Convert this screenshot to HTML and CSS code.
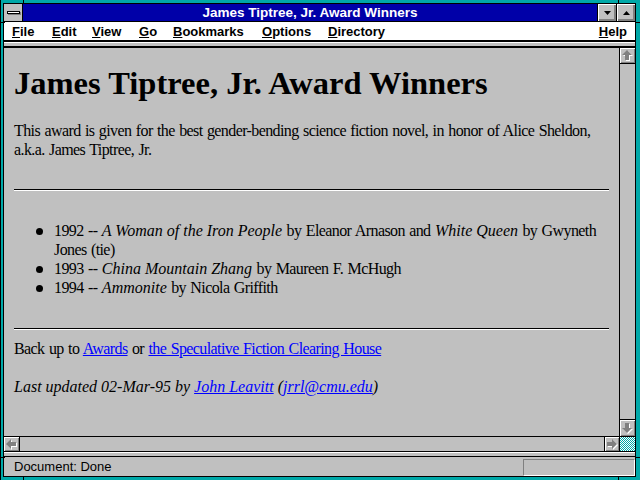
FILE: index.html
```html
<!DOCTYPE html>
<html>
<head>
<meta charset="utf-8">
<title>James Tiptree, Jr. Award Winners</title>
<link rel="stylesheet" href="styles.css">
</head>
<body>
<div class="window">
  <span class="notch nv n-tl"></span>
  <span class="notch nv n-tr"></span>
  <span class="notch nv n-bl"></span>
  <span class="notch nv n-br"></span>
  <span class="notch nh n-lt"></span>
  <span class="notch nh n-lb"></span>
  <span class="notch nh n-rt"></span>
  <span class="notch nh n-rb"></span>
  <div class="frame">
    <div class="titlebar">
      <div class="sysmenu"><span class="sysbar"></span></div>
      <div class="title">James Tiptree, Jr. Award Winners</div>
      <div class="tbtn"><svg width="7" height="4" viewBox="0 0 7 4"><path d="M0 0H7L3.5 4Z" fill="#000"/></svg></div>
      <div class="tbtn"><svg width="7" height="4" viewBox="0 0 7 4"><path d="M0 4H7L3.5 0Z" fill="#000"/></svg></div>
    </div>
    <div class="menubar">
      <span class="mi"><u>F</u>ile</span>
      <span class="mi"><u>E</u>dit</span>
      <span class="mi"><u>V</u>iew</span>
      <span class="mi"><u>G</u>o</span>
      <span class="mi"><u>B</u>ookmarks</span>
      <span class="mi"><u>O</u>ptions</span>
      <span class="mi"><u>D</u>irectory</span>
      <span class="spacer"></span>
      <span class="mi"><u>H</u>elp</span>
    </div>
    <div class="strip"></div>
    <div class="middle">
      <div class="page">
        <h1>James Tiptree, Jr. Award Winners</h1>
        <p class="intro">This award is given for the best gender-bending science fiction novel, in honor of Alice Sheldon, a.k.a. James Tiptree, Jr.</p>
        <hr class="rule r1">
        <ul class="winners">
          <li>1992 -- <i>A Woman of the Iron People</i> by Eleanor Arnason and <i>White Queen</i> by Gwyneth Jones (tie)</li>
          <li>1993 -- <i>China Mountain Zhang</i> by Maureen F. McHugh</li>
          <li>1994 -- <i>Ammonite</i> by Nicola Griffith</li>
        </ul>
        <hr class="rule r2">
        <p class="back">Back up to <a href="#">Awards</a> or <a href="#">the Speculative Fiction Clearing House</a></p>
        <p class="updated"><i>Last updated 02-Mar-95 by <a href="#">John Leavitt</a> (<a href="#">jrrl@cmu.edu</a>)</i></p>
      </div>
      <div class="vscroll">
        <div class="sbtn sb-up"><svg width="11" height="11" viewBox="0 0 11 11"><path d="M5 0L10 5H7V10H3V5H0Z" fill="#fff" transform="translate(1 1)"/><path d="M5 0L10 5H7V10H3V5H0Z" fill="#808080"/></svg></div>
        <div class="track"></div>
        <div class="sbtn sb-down"><svg width="11" height="11" viewBox="0 0 11 11"><path d="M5 10L10 5H7V0H3V5H0Z" fill="#fff" transform="translate(1 1)"/><path d="M5 10L10 5H7V0H3V5H0Z" fill="#808080"/></svg></div>
      </div>
    </div>
    <div class="hscroll">
      <div class="sbtn sb-left"><svg width="11" height="11" viewBox="0 0 11 11"><path d="M0 5L5 0V3H10V7H5V10Z" fill="#fff" transform="translate(1 1)"/><path d="M0 5L5 0V3H10V7H5V10Z" fill="#808080"/></svg></div>
      <div class="track"></div>
      <div class="sbtn sb-right"><svg width="11" height="11" viewBox="0 0 11 11"><path d="M10 5L5 0V3H0V7H5V10Z" fill="#fff" transform="translate(1 1)"/><path d="M10 5L5 0V3H0V7H5V10Z" fill="#808080"/></svg></div>
      <div class="corner"></div>
    </div>
    <div class="strip2"></div>
    <div class="status">
      <span class="status-text">Document: Done</span>
      <div class="progress"></div>
    </div>
  </div>
</div>
</body>
</html>
```

FILE: styles.css
```css
* { box-sizing: border-box; }

body { margin: 0; background: #00a8a8; }

.window {
  position: relative;
  width: 640px;
  height: 480px;
  background: #00a8a8;
  border-left: 1px solid #000;
  padding: 3px 4px 3px 2px;
  overflow: hidden;
}

.notch { position: absolute; background: #000; }
.nv { width: 1px; height: 3px; }
.nh { width: 4px; height: 1px; }
.n-tl { left: 22px; top: 0; }
.n-tr { left: 617px; top: 0; }
.n-bl { left: 22px; bottom: 0; }
.n-br { left: 617px; bottom: 0; }
.n-lt { left: 0; top: 22px; }
.n-lb { left: 0; top: 457px; }
.n-rt { right: 0; top: 22px; }
.n-rb { right: 0; top: 457px; }

.frame {
  height: 100%;
  border: 1px solid #000;
  background: #c0c0c0;
  display: flex;
  flex-direction: column;
}

/* title bar */
.titlebar {
  height: 18px;
  display: flex;
  background: #0000a8;
  border-bottom: 1px solid #000;
}
.sysmenu {
  width: 19px;
  background: #c0c0c0;
  border-right: 1px solid #000;
  display: flex;
  align-items: center;
  justify-content: center;
}
.sysbar {
  width: 13px;
  height: 3px;
  background: #fff;
  border: 1px solid #000;
  box-shadow: 1px 1px 0 #808080;
}
.title {
  flex: 1;
  color: #fff;
  font: bold 13.5px/17px "Liberation Sans", Arial, sans-serif;
  text-align: center;
  white-space: nowrap;
}
.tbtn {
  width: 19px;
  border-left: 1px solid #000;
  background: #c0c0c0;
  box-shadow: inset 1px 1px 0 #fff, inset -1px -1px 0 #808080, inset -2px -2px 0 #808080;
  display: flex;
  align-items: center;
  justify-content: center;
}

/* menu bar */
.menubar {
  height: 20px;
  background: #fff;
  border-bottom: 2px solid #000;
  display: grid;
  grid-template-columns: 40px 40px 47px 34px 89px 66px auto 1fr auto;
  padding: 0 8px;
  font: bold 13px/19px "Liberation Sans", Arial, sans-serif;
  color: #000;
  white-space: nowrap;
}
.mi u { text-decoration: underline; text-underline-offset: 1px; }

.strip {
  height: 6px;
  border-top: 1px solid #fff;
  border-bottom: 2px solid #000;
  background: #c0c0c0;
}

/* content */
.middle {
  height: 389px;
  display: flex;
  border-bottom: 1px solid #000;
}
.page {
  flex: 1;
  min-width: 0;
  padding: 0 10px;
  overflow: hidden;
  font-family: "Liberation Serif", "Times New Roman", serif;
  font-size: 16px;
  line-height: 19px;
  letter-spacing: -0.6px;
  word-spacing: 1px;
  color: #000;
}
.page i { letter-spacing: 0; word-spacing: 0; }
.page h1 {
  font-size: 32.5px;
  line-height: 37px;
  font-weight: bold;
  letter-spacing: 0;
  word-spacing: 0;
  margin: 17px 0 19px;
}
.page p { margin: 0; }
.page a { color: #0000ff; text-decoration: underline; }

.rule {
  height: 0;
  border: 0;
  border-top: 1px solid #000;
  border-bottom: 1px solid #fff;
  margin: 0;
}
.r1 { margin: 30px 0 30px; }
.r2 { margin: 31px 0 9px; }

.winners {
  list-style: none;
  margin: 0;
  padding: 0 0 0 40px;
}
.winners li { position: relative; }
.winners li::before {
  content: "";
  position: absolute;
  left: -18px;
  top: 7px;
  width: 7px;
  height: 7px;
  border-radius: 50%;
  background: #000;
}

.page .updated { margin-top: 19px; }

/* scrollbars */
.sbtn {
  background: #c0c0c0;
  box-shadow: inset 1px 1px 0 #fff, inset -1px -1px 0 #808080;
  display: flex;
  align-items: center;
  justify-content: center;
}
.track { flex: 1; background: #c0c0c0; }

.vscroll {
  width: 16px;
  border-left: 1px solid #000;
  display: flex;
  flex-direction: column;
}
.sb-up { height: 16px; border-bottom: 1px solid #000; }
.sb-down { height: 17px; border-top: 1px solid #000; }

.hscroll {
  height: 15px;
  display: flex;
  border-bottom: 1px solid #000;
}
.sb-left { width: 16px; border-right: 1px solid #000; }
.sb-right { width: 15px; border-left: 1px solid #000; }
.corner {
  width: 16px;
  border-left: 1px solid #000;
  background: repeating-conic-gradient(#00a8a8 0 25%, #fff 0 50%) 0 0 / 2px 2px;
}

.strip2 {
  height: 5px;
  border-top: 1px solid #fff;
  border-bottom: 1px solid #000;
  background: #c0c0c0;
}

/* status bar */
.status {
  height: 19px;
  display: flex;
  justify-content: space-between;
  padding-left: 10px;
  font: 13px/19px "Liberation Sans", Arial, sans-serif;
  color: #000;
}
.progress {
  width: 112px;
  height: 17px;
  margin-top: 2px;
  border: 1px solid;
  border-color: #808080 #fff #fff #808080;
}
```
